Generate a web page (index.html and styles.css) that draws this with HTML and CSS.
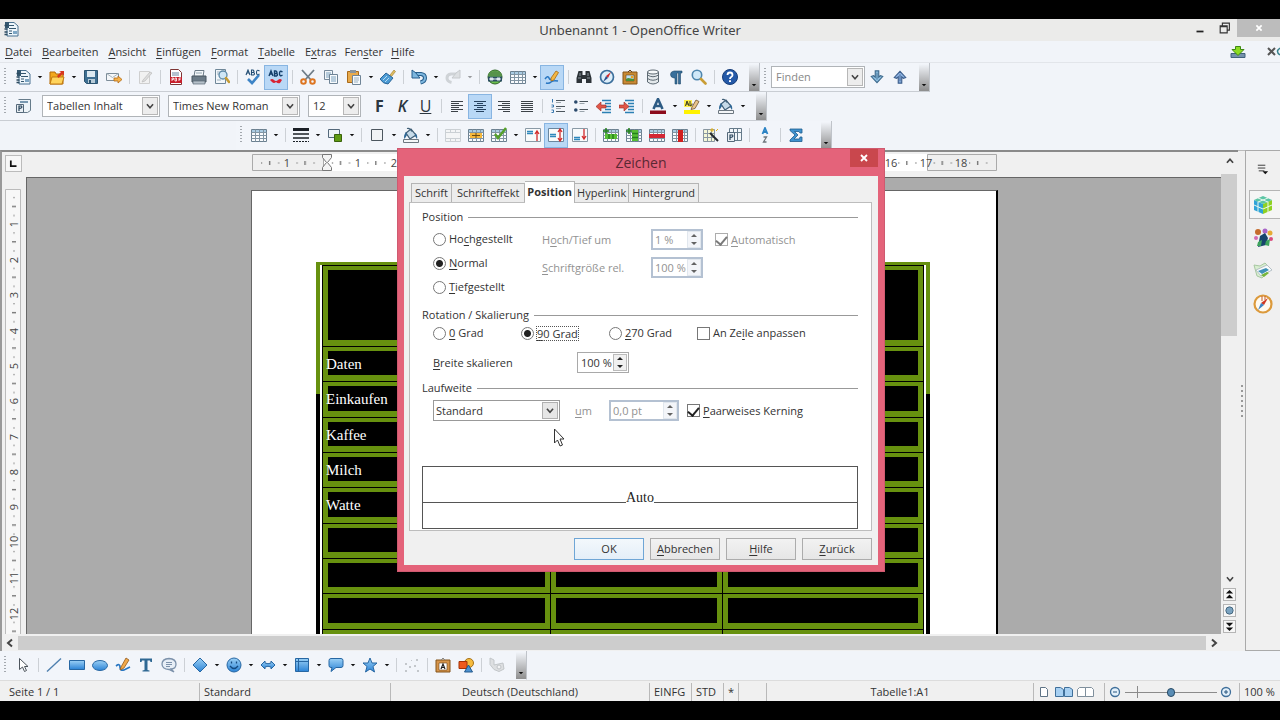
FILE: index.html
```html
<!DOCTYPE html>
<html lang="de">
<head>
<meta charset="utf-8">
<title>Unbenannt 1 - OpenOffice Writer</title>
<link rel="stylesheet" href="styles.css">
</head>
<body>
<svg class="sprite" aria-hidden="true">
  <defs>
    <linearGradient id="g-blue" x1="0" y1="0" x2="0" y2="1"><stop offset="0" stop-color="#9bd0f5"/><stop offset="1" stop-color="#2b83d6"/></linearGradient>
    <pattern id="ticks-h" x="71" width="35.4" height="18" patternUnits="userSpaceOnUse"><path d="M9 8h1v2h-1zM26 8h1v2h-1z" fill="#999"/><path d="M17 7h1v4h-1z" fill="#444"/></pattern>
    <pattern id="ticks-v" y="0" width="16" height="35.4" patternUnits="userSpaceOnUse"><path d="M8 8h2v1h-2zM8 26h2v1h-2z" fill="#999"/><path d="M7 17h4v1h-4z" fill="#444"/></pattern>
  </defs>
  <symbol id="i-new" viewBox="0 0 16 16"><path d="M4 1.500h7l4 3.500v10H4z" fill="#eef6fb" stroke="#4b7391"/><path d="M2 1h4v6H2z" fill="#34576f"/><path d="M6 4.500h5M6 7.500h7M6 12.500h3M6 10h3" stroke="#34576f"/><path d="M10 10h4v3h-4z" fill="#7fa7c4"/><path d="M1.500 4.500h3M1.500 8h3M1.500 11h3M1.500 13.500h3" stroke="#2d4b60" stroke-width="1.300"/></symbol>
  <symbol id="i-open" viewBox="0 0 16 16"><path d="M1 3h5l1 2h7v10H1z" fill="#f2a81d" stroke="#b46a0a"/><path d="M3 8h12l-2 7H1z" fill="#ffd45c" stroke="#c27b10"/><path d="M8 7l4-4-2-1h5v5l-1.500-2-4 4z" fill="#d8371f"/></symbol>
  <symbol id="i-save" viewBox="0 0 16 16"><path d="M1.500 1.500h13v13h-11l-2-2z" fill="#3e6f92" stroke="#2c5470"/><path d="M4 2h8v6H4z" fill="#dce9f1"/><path d="M5 10h7v4H5z" fill="#b8ccd8"/><path d="M6 11h2v3H6z" fill="#2c5470"/></symbol>
  <symbol id="i-mail" viewBox="0 0 16 16"><path d="M.5 4.500h12v7H.5z" fill="#f5f7f9" stroke="#7d8d99"/><path d="M.5 4.500l6 4 6-4" fill="none" stroke="#a7b4bd"/><path d="M8 9h4V7l4 3.500-4 3.500v-2H8z" fill="#f6b24a" stroke="#b36b14" stroke-width=".8"/></symbol>
  <symbol id="i-edit" viewBox="0 0 16 16"><path d="M2.500 2.500h10v12h-10z" fill="#f1f1f1" stroke="#cfcfcf"/><path d="M6 11l7-8 2 1-7 8-3 1z" fill="#ddd" stroke="#bbb" stroke-width=".7"/></symbol>
  <symbol id="i-pdf" viewBox="0 0 16 16"><path d="M2.500.5h8l3 3v12h-11z" fill="#fff" stroke="#7e3434"/><path d="M4 4h7M4 6h7" stroke="#6a87a0"/><path d="M2 8h12v6H2z" fill="#c8202c"/><path d="M4 12v-3h1.500v1.500H4M7 9v3h1.500V9zM11 12V9h2M11 10.500h1.500" stroke="#fff" fill="none" stroke-width=".8"/></symbol>
  <symbol id="i-print" viewBox="0 0 16 16"><path d="M4 1.500h9l-1 6H3z" fill="#f4f7f9" stroke="#6d7c88"/><path d="M1 7h14v6H1z" fill="#6c7b87" stroke="#46545f"/><path d="M2 12h12v3H2z" fill="#b6c1ca" stroke="#5a6872" stroke-width=".7"/><path d="M5 4h6" stroke="#93a4b0"/></symbol>
  <symbol id="i-preview" viewBox="0 0 16 16"><path d="M1.500.5h10v14h-10z" fill="#f3f7fa" stroke="#6f8798"/><path d="M3 3h6M3 5h4M3 11h4" stroke="#9db1bf"/><circle cx="9" cy="6" r="4" fill="#cfe7f7" stroke="#5c88a6" stroke-width="1.300"/><path d="M12 9l3 4" stroke="#c69c34" stroke-width="2.500" stroke-linecap="round"/></symbol>
  <symbol id="i-spell" viewBox="0 0 16 16"><path d="M1 6l2-5 2 5M2 4h2M6.500 1v5h2q2-1.500 0-2.500h-2 1.500q2-1 0-2.500zM14.500 2q-3-2-3 1.500t3 1.500" fill="none" stroke="#234e74" stroke-width="1.100"/><path d="M3 10l4 4 7-8" fill="none" stroke="#3d84c6" stroke-width="2.600"/></symbol>
  <symbol id="i-abc" viewBox="0 0 16 16"><path d="M1 7l2-5 2 5M2 5h2M6.500 2v5h2q2-1.500 0-2.500h-2 1.500q2-1 0-2.500zM14.500 3q-3-2-3 1.500t3 1.500" fill="none" stroke="#143f6b" stroke-width="1.400"/><path d="M2 11q2-2 4 0t4 0 4 0l-2 3q-2 1-4-1-2 2-4 0z" fill="#d92231"/></symbol>
  <symbol id="i-cut" viewBox="0 0 16 16"><path d="M2 1l9 10M14 1L5 11" stroke="#6f7d88" stroke-width="1.800"/><circle cx="3.500" cy="12.500" r="2.300" fill="none" stroke="#dd7521" stroke-width="2"/><circle cx="12.500" cy="12.500" r="2.300" fill="none" stroke="#dd7521" stroke-width="2"/></symbol>
  <symbol id="i-copy" viewBox="0 0 16 16"><path d="M1.500 1.500h8v9h-8z" fill="#f2f6f9" stroke="#76899a"/><path d="M3 4h5M3 6h5M3 8h5" stroke="#7ba0bd"/><path d="M6.500 5.500h8v9h-8z" fill="#f7fafc" stroke="#6f8496"/><path d="M8 8h5M8 10h5M8 12h5" stroke="#7ba0bd"/></symbol>
  <symbol id="i-paste" viewBox="0 0 16 16"><path d="M1.500 2.500h11v11h-11z" fill="#e8aa4c" stroke="#a96a1a"/><path d="M4 1h6v3H4z" fill="#8a949c"/><path d="M6.500 6.500h8v9h-8z" fill="#f7fafc" stroke="#6f8496"/><path d="M8 9h5M8 11h5M8 13h4" stroke="#9bb0c0"/></symbol>
  <symbol id="i-brush" viewBox="0 0 16 16"><path d="M10 6l4-5 1.500 1.500-4 5z" fill="#e0be62" stroke="#9a7728" stroke-width=".6"/><path d="M6 4l7 5-5 6q-5 0-8-5z" fill="#4b9ad4" stroke="#2b6699"/><path d="M3 11l4-4M5 13l4-4" stroke="#b5daf2"/></symbol>
  <symbol id="i-undo" viewBox="0 0 16 16"><path d="M3 5h7q4 .5 4 4t-4.500 4.500" fill="none" stroke="#265d8b" stroke-width="4"/><path d="M3 5h7q4 .5 4 4t-4.500 4.500" fill="none" stroke="#7db6de" stroke-width="2"/><path d="M1 1v8h8L6.500 6 5 4z" fill="#7db6de" stroke="#265d8b"/></symbol>
  <symbol id="i-redo" viewBox="0 0 16 16"><path d="M13 5H6Q2 5.500 2 9t4.500 4.500" fill="none" stroke="#cfd3d7" stroke-width="3"/><path d="M15 1v8H7l2.500-3L11 4z" fill="#dde0e3" stroke="#c6cacd"/></symbol>
  <symbol id="i-globe" viewBox="0 0 16 16"><circle cx="8" cy="8" r="7" fill="#6cc04e" stroke="#2f6424"/><path d="M2 4q6-4 12 0l1 3H1z" fill="#57934a"/><path d="M1 7.500h14v5H1z" fill="#2c4f63"/><path d="M3 9h3v2H3zM10 9h3v2h-3zM6 10h4" fill="#dfe8ee" stroke="#dfe8ee"/></symbol>
  <symbol id="i-table" viewBox="0 0 16 16"><path d="M.5 2.500h15v12H.5z" fill="#f9fbfd" stroke="#6b8090"/><path d="M1 3h14v2H1z" fill="#a9cbe2"/><path d="M.5 5.500h15M.5 8.500h15M.5 11.500h15M4.500 2.500v12M8.500 2.500v12M12.500 2.500v12" stroke="#8295a3" fill="none"/></symbol>
  <symbol id="i-draw" viewBox="0 0 16 16"><path d="M1 10q3-4 4-1t3 0M2 14q3 1 5-1t7-1" fill="none" stroke="#2876c2" stroke-width="1.500"/><path d="M7 9l5-7 2.500 1.500L10 11l-3 1z" fill="#f3b745" stroke="#a46a14" stroke-width=".8"/></symbol>
  <symbol id="i-binoc" viewBox="0 0 16 16"><path d="M2.500 2h4v4h3V2h4l2 7v5h-5.500v-4h-4v4H.5V9z" fill="#2d3338"/><path d="M2 9h3M11 9h3M4 4v3M12 4v3" stroke="#8c969d"/></symbol>
  <symbol id="i-nav" viewBox="0 0 16 16"><circle cx="8" cy="8" r="6.500" fill="#dceefa" stroke="#3c6f9c" stroke-width="1.700"/><path d="M12 3L9 9 7 7z" fill="#d42a2a"/><path d="M4 13l3-6 2 2z" fill="#2f4f8c"/></symbol>
  <symbol id="i-gallery" viewBox="0 0 16 16"><path d="M1 3h14v12H1z" fill="#c98a33" stroke="#84541a"/><path d="M4 6h8v6H4z" fill="#bfe0f2" stroke="#6b451a" stroke-width=".6"/><path d="M4 12v-2l2-1 6 1v2z" fill="#4c8f3a"/><circle cx="10" cy="8" r="1.300" fill="#f2a21c"/><path d="M6 3l2-2 2 2" fill="none" stroke="#6b451a"/></symbol>
  <symbol id="i-db" viewBox="0 0 16 16"><path d="M2.500 3v10q5.500 4 11 0V3z" fill="#e3e8eb" stroke="#5e6a73"/><ellipse cx="8" cy="3" rx="5.500" ry="2" fill="#f7f9fa" stroke="#5e6a73"/><path d="M2.500 6q5.500 3.500 11 0M2.500 9.500q5.500 3.500 11 0" fill="none" stroke="#5e6a73"/></symbol>
  <symbol id="i-pilcrow" viewBox="0 0 16 16"><path d="M14 2H6Q2.500 2.500 2.500 5.500T6 9h1v6h2V4h1.500v11h2V4H14z" fill="#386f9b" stroke="#20496b" stroke-width=".6"/></symbol>
  <symbol id="i-zoom" viewBox="0 0 16 16"><circle cx="6" cy="6" r="4.700" fill="#cfe8f8" stroke="#4e86ae" stroke-width="1.600"/><path d="M10 10l4.500 4.500" stroke="#c99d35" stroke-width="2.600" stroke-linecap="round"/></symbol>
  <symbol id="i-help" viewBox="0 0 16 16"><circle cx="8" cy="8" r="7.500" fill="#2459a8" stroke="#163d78"/><path d="M5.500 6q0-2.500 2.500-2.500T10.500 6q0 1.200-1.300 2T8 10" fill="none" stroke="#fff" stroke-width="1.800"/><path d="M7 11.200h2v1.800H7z" fill="#fff"/></symbol>
  <symbol id="i-down" viewBox="0 0 16 16"><path d="M6 1h4v7l2-1.500 2.500 1L8 14.500l-6.500-7 2.500-1L6 8z" fill="#8fc0e2" stroke="#3d6a8d" stroke-width="1.300"/><path d="M8 3v8" stroke="#3d6a8d"/></symbol>
  <symbol id="i-up" viewBox="0 0 16 16"><path d="M6 15h4V8l2 1.500 2.500-1L8 1.500l-6.500 7 2.500 1L6 8z" fill="#8fb4e2" stroke="#3d5f8d" stroke-width="1.300"/><path d="M8 5v8" stroke="#3d5f8d"/></symbol>
  <symbol id="i-styles" viewBox="0 0 16 16"><path d="M3.500 1.500h12v11l-3 2H8" fill="#eef4f8" stroke="#667b8a"/><path d="M5 4h8" stroke="#7a99b0" stroke-width="2"/><path d="M1.500 6.500h7v8h-7z" fill="#e8eef3" stroke="#55697a"/><path d="M4 13V8h2.500q1.500 2-2.500 2.500" fill="none" stroke="#2a465c" stroke-width="1.200"/></symbol>
  <symbol id="i-left" viewBox="0 0 16 16"><path d="M2 3.500h12M2 5.500h8M2 7.500h12M2 9.500h8M2 11.500h12M2 13.500h7" stroke="#3c4247"/></symbol>
  <symbol id="i-center" viewBox="0 0 16 16"><path d="M2 3.500h12M5 5.500h6M2 7.500h12M5 9.500h6M2 11.500h12M4 13.500h8" stroke="#25415f"/></symbol>
  <symbol id="i-right" viewBox="0 0 16 16"><path d="M2 3.500h12M6 5.500h8M2 7.500h12M6 9.500h8M2 11.500h12M7 13.500h7" stroke="#3c4247"/></symbol>
  <symbol id="i-just" viewBox="0 0 16 16"><path d="M2 3.500h12M2 5.500h12M2 7.500h12M2 9.500h12M2 11.500h12M2 13.500h12" stroke="#3c4247"/></symbol>
  <symbol id="i-num" viewBox="0 0 16 16"><path d="M2.500 1v3.500M1.500 7h2v2h-2M1.500 12h2v2.500h-2" fill="none" stroke="#3a79ae"/><path d="M6 2.500h9M6 8.500h9M6 13.500h9" stroke="#4b555c"/><path d="M6 4.500h5M6 10.500h5" stroke="#9aa4ab"/></symbol>
  <symbol id="i-bul" viewBox="0 0 16 16"><circle cx="2.800" cy="4" r="1.800" fill="#2b4a6c"/><circle cx="2.800" cy="12" r="1.800" fill="#2b4a6c"/><path d="M6.500 3.500H15M6.500 11.500H15" stroke="#4b555c"/><path d="M6.500 5.500h5M6.500 13.500h5" stroke="#9aa4ab"/></symbol>
  <symbol id="i-outd" viewBox="0 0 16 16"><path d="M6 2.500h9M9 5.500h6M9 8.500h6M9 11.500h6M6 14.500h9" stroke="#2b80b4" stroke-width="1.300"/><path d="M0 8.500L5 4v3h5v3H5v3z" fill="#e05648" stroke="#9b2a22" stroke-width=".6"/></symbol>
  <symbol id="i-ind" viewBox="0 0 16 16"><path d="M6 2.500h9M9 5.500h6M9 8.500h6M9 11.500h6M6 14.500h9" stroke="#2b80b4" stroke-width="1.300"/><path d="M10 8.500L5 4v3H0v3h5v3z" fill="#e05648" stroke="#9b2a22" stroke-width=".6"/></symbol>
  <symbol id="i-color" viewBox="0 0 16 16"><path d="M3.500 11L8 1l4.500 10M5 8h6" fill="none" stroke="#2d5b84" stroke-width="2.600"/><path d="M0 12.500h16V16H0z" fill="#8c0c1c"/></symbol>
  <symbol id="i-high" viewBox="0 0 16 16"><path d="M0 12h16v4H0z" fill="#fff200"/><path d="M0 2h8v7H0z" fill="#fff04a"/><path d="M1.500 8L3 3l2 5M2 6h2.500M6 3v5q3-1 2-2.500" fill="none" stroke="#3c3b21"/><path d="M8 9l4-7 3 1.500-4 7-4 1z" fill="#e9c58c" stroke="#6f5330" stroke-width=".8"/></symbol>
  <symbol id="i-fill" viewBox="0 0 16 16"><path d="M3 6l5-4 5 6-6 4z" fill="#c7dbe9" stroke="#3f5e76" stroke-width="1.200"/><path d="M4 1.500q3-1 5 3" fill="none" stroke="#3f5e76" stroke-width="1.200"/><path d="M3 5q-3 4-1.500 7L4 8zM12 6q3 2 2 6l-2-3z" fill="#2d6694"/><path d="M.5 12.500h15v3H.5z" fill="#f4f6f8" stroke="#6c7780"/></symbol>
  <symbol id="i-line" viewBox="0 0 16 16"><path d="M0 2.500h16" stroke="#1b2026" stroke-width="3"/><path d="M0 7h16M0 11h16" stroke="#1b2026" stroke-width="1.500"/><path d="M0 14.500h16" stroke="#1b2026" stroke-dasharray="2 1"/></symbol>
  <symbol id="i-lcol" viewBox="0 0 16 16"><path d="M1.500 2.500h11v8h-11z" fill="#eef3f7" stroke="#53687a"/><path d="M7.500 7.500h7v7h-7z" fill="#5f9a12" stroke="#39620a"/></symbol>
  <symbol id="i-bord" viewBox="0 0 16 16"><path d="M2.500 2.500h11v11h-11z" fill="#f1f3f5" stroke="#4c565e"/></symbol>
  <symbol id="i-merge" viewBox="0 0 16 16"><path d="M.5 2.500h15v12H.5zM.5 5.500h15M.5 11.500h15M5.500 2.500v3M10.500 2.500v3M5.500 11.500v3M10.500 11.500v3" fill="#f4f5f6" stroke="#cbd0d4"/></symbol>
  <symbol id="i-split" viewBox="0 0 16 16"><use href="#i-table"/><path d="M2 6h12v5H2z" fill="#f5b83d"/><path d="M4 8.500h8M8 6v5" stroke="#6b4b12"/></symbol>
  <symbol id="i-opt" viewBox="0 0 16 16"><use href="#i-table"/><path d="M4 7l3 4 8-10" fill="none" stroke="#55a02a" stroke-width="2.500"/></symbol>
  <symbol id="i-vtop" viewBox="0 0 16 16"><path d="M.5 1.500h15v13H.5z" fill="#f8fafb" stroke="#8a9aa6"/><path d="M2 4.500h6M2 6.500h6" stroke="#2e87bc" stroke-width="1.300"/><path d="M12 14V5M10 7l2-3 2 3" fill="none" stroke="#d22c2c" stroke-width="1.300"/></symbol>
  <symbol id="i-vmid" viewBox="0 0 16 16"><path d="M.5 1.500h15v13H.5z" fill="#f8fafb" stroke="#6a87a0"/><path d="M2 7.500h6M2 9.500h6" stroke="#2e87bc" stroke-width="1.300"/><path d="M12 13V3M10 5l2-3 2 3M10 11l2 3 2-3" fill="none" stroke="#d22c2c" stroke-width="1.300"/></symbol>
  <symbol id="i-vbot" viewBox="0 0 16 16"><path d="M.5 1.500h15v13H.5z" fill="#f8fafb" stroke="#8a9aa6"/><path d="M2 10.500h6M2 12.500h6" stroke="#2e87bc" stroke-width="1.300"/><path d="M12 2v9M10 9l2 3 2-3" fill="none" stroke="#d22c2c" stroke-width="1.300"/></symbol>
  <symbol id="i-insr" viewBox="0 0 16 16"><use href="#i-table"/><path d="M2 7h12v5H2z" fill="#57bd35"/><path d="M6 7v5M10 7v5M3 1v6M0 4h6" stroke="#23821a" stroke-width="1.500"/></symbol>
  <symbol id="i-insc" viewBox="0 0 16 16"><use href="#i-table"/><path d="M6 3h6v11H6z" fill="#57bd35"/><path d="M6 6.500h6M6 10.500h6M3 1v6M0 4h6" stroke="#23821a" stroke-width="1.500"/></symbol>
  <symbol id="i-delr" viewBox="0 0 16 16"><use href="#i-table"/><path d="M0 7h16v4H0z" fill="#d32734"/></symbol>
  <symbol id="i-delc" viewBox="0 0 16 16"><use href="#i-table"/><path d="M6 3h5v12H6z" fill="#d11f1f"/></symbol>
  <symbol id="i-auto" viewBox="0 0 16 16"><path d="M.5 2.500h11v12H.5zM.5 6.500h11M.5 10.500h11M4.500 2.500v12M8.500 2.500v12" fill="#f4f7d8" stroke="#8997a1"/><path d="M7 6l8 8" stroke="#24292d" stroke-width="2"/><path d="M9 1v4M7 3h4M13 4l2-2" stroke="#e3b21c"/></symbol>
  <symbol id="i-prop" viewBox="0 0 16 16"><path d="M3.500 1.500h12v12h-12zM3.500 5.500h12M11.500 1.500v12M7.500 1.500v4" fill="#f3f7fa" stroke="#667b8a"/><path d="M1.500 5.500h7v9h-7z" fill="#e8eef3" stroke="#55697a"/><path d="M4 13V8h2.500q1.500 2-2.500 2.500" fill="none" stroke="#2a465c" stroke-width="1.200"/></symbol>
  <symbol id="i-sort" viewBox="0 0 16 16"><path d="M5.500 7L8 1l2.500 6M6.500 5h3" fill="none" stroke="#2b83c4" stroke-width="1.800"/><path d="M6.500 10h3l-3 5h3" fill="none" stroke="#6c757c" stroke-width="1.300"/></symbol>
  <symbol id="i-sum" viewBox="0 0 16 16"><path d="M2 2h12v4h-2L11 4.500H6.500L10 8l-4 4h5.500l.5-2h2v4.500H2V13l5-5-5-4.500z" fill="#3f92cf" stroke="#205d8e" stroke-width=".8"/></symbol>
  <symbol id="i-cursor" viewBox="0 0 16 16"><path d="M4.500 1.500v11l3-2.500 2 4.500 2-1-2-4h3.500z" fill="#fff" stroke="#4d555c"/></symbol>
  <symbol id="i-dline" viewBox="0 0 16 16"><path d="M1 14.500L15 1.500" stroke="#4e7fae" stroke-width="1.400"/></symbol>
  <symbol id="i-rect" viewBox="0 0 16 16"><path d="M.5 3.500h15v9H.5z" fill="url(#g-blue)" stroke="#2767a3"/></symbol>
  <symbol id="i-ell" viewBox="0 0 16 16"><ellipse cx="8" cy="8.500" rx="7.500" ry="5" fill="url(#g-blue)" stroke="#2767a3"/></symbol>
  <symbol id="i-pen" viewBox="0 0 16 16"><path d="M1 9q4-3 4 1t4 3q4-2 6-3" fill="none" stroke="#2876c2" stroke-width="1.700"/><path d="M6 10l5-9 3 2-5 8-4 2z" fill="#f0a84a" stroke="#93591b" stroke-width=".8"/></symbol>
  <symbol id="i-T" viewBox="0 0 16 16"><path d="M2 1.500h12V5h-1.500L12 3.500H9.500V13l2 .5v1h-7v-1l2-.5V3.500H4L3.500 5H2z" fill="#2f6893"/></symbol>
  <symbol id="i-note" viewBox="0 0 16 16"><path d="M8 1.500q7 .5 7 5.500t-5 5l3 3-5-2.500Q1 12 1 7t7-5.500z" fill="#e7eef6" stroke="#7d92ab" stroke-width="1.300"/><path d="M5 5.500h6M5 7.500h6M5 9.500h4" stroke="#7d92ab"/></symbol>
  <symbol id="i-dia" viewBox="0 0 16 16"><path d="M8 1l7 7-7 7-7-7z" fill="url(#g-blue)" stroke="#2767a3"/></symbol>
  <symbol id="i-smile" viewBox="0 0 16 16"><circle cx="8" cy="8" r="7" fill="url(#g-blue)" stroke="#2767a3"/><path d="M4 9q4 5 8 0M5.500 4.500v2M10.500 4.500v2" fill="none" stroke="#144a80" stroke-width="1.300"/></symbol>
  <symbol id="i-arr" viewBox="0 0 16 16"><path d="M1 8l4-4v2q3 1.500 6 0V4l4 4-4 4v-2q-3-1.500-6 0v2z" fill="url(#g-blue)" stroke="#2767a3"/></symbol>
  <symbol id="i-flow" viewBox="0 0 16 16"><path d="M1.500 1.500h13v13h-13z" fill="url(#g-blue)" stroke="#2767a3"/><path d="M4.500 1.500v13M1.500 4.500h13" stroke="#2767a3"/></symbol>
  <symbol id="i-call" viewBox="0 0 16 16"><path d="M3 1.500h10q2 0 2 2v5q0 2-2 2H8l-5 4 1-4H3q-2 0-2-2v-5q0-2 2-2z" fill="url(#g-blue)" stroke="#2767a3"/></symbol>
  <symbol id="i-star" viewBox="0 0 16 16"><path d="M8 1l2 5h5l-4 3.500 1.500 5.500L8 12l-4.500 3L5 9.500 1 6h5z" fill="url(#g-blue)" stroke="#2767a3"/></symbol>
  <symbol id="i-pts" viewBox="0 0 16 16"><path d="M1 6h2v2H1zM7 3h1v1H7zM12 2h2v2h-2zM5 9h2v2H5zM1 13h2v2H1zM10 8h2v2h-2zM13 13h2v2h-2z" fill="#c3c7cb"/></symbol>
  <symbol id="i-fw" viewBox="0 0 16 16"><path d="M1 3h14v12H1z" fill="#d6944a" stroke="#84541a"/><path d="M4 6h8v7H4z" fill="#fff" stroke="#6b451a" stroke-width=".6"/><path d="M6 12l2-5 2 5M6.500 10.500h3" fill="none" stroke="#222" stroke-width="1.200"/><path d="M6 3l2-2 2 2" fill="none" stroke="#888"/></symbol>
  <symbol id="i-shapes" viewBox="0 0 16 16"><circle cx="11" cy="6" r="4.500" fill="#f6bb3d" stroke="#a6731a"/><path d="M1 4.500h8v7H1z" fill="#ef5a1d" stroke="#a33207"/><path d="M10.500 8l4 7h-8z" fill="#4c92d0" stroke="#22588c"/></symbol>
  <symbol id="i-extr" viewBox="0 0 16 16"><path d="M1 1l4 2v5l9-2 1 6-5 2.500-5-2-4-5z" fill="#dddfe1" stroke="#c2c6c9"/><circle cx="10" cy="10" r="2" fill="#f2f3f4" stroke="#bfc3c6"/></symbol>
  <symbol id="i-chev" viewBox="0 0 16 16"><path d="M4.500 6L8 10l3.500-4" fill="none" stroke="#444" stroke-width="1.800"/></symbol>
  <symbol id="i-tri" viewBox="0 0 8 8"><path d="M1 2.500h6L4 5.500z" fill="#111"/></symbol>
</svg>

<div class="app">
  <header class="titlebar">
    <svg class="ico app-ico"><use href="#i-new"/></svg>
    <h1 class="title">Unbenannt 1 - OpenOffice Writer</h1>
    <div class="winbtns">
      <button class="winbtn" aria-label="Minimieren"><svg viewBox="0 0 16 16"><path d="M4 12h8" stroke="#222" stroke-width="2"/></svg></button>
      <button class="winbtn" aria-label="Wiederherstellen"><svg viewBox="0 0 16 16"><path d="M5 5V2.500h8v8h-2M2.500 5.500h8v8h-8zM2 6.500h9" fill="none" stroke="#333" stroke-width="1.300"/></svg></button>
      <button class="winbtn winclose" aria-label="Schließen"><svg viewBox="0 0 16 16"><path d="M5 5l6 6M11 5l-6 6" stroke="#fff" stroke-width="2"/></svg></button>
    </div>
  </header>

  <nav class="menubar">
    <button><u>D</u>atei</button><button><u>B</u>earbeiten</button><button><u>A</u>nsicht</button><button><u>E</u>infügen</button><button><u>F</u>ormat</button><button><u>T</u>abelle</button><button>E<u>x</u>tras</button><button>Fen<u>s</u>ter</button><button><u>H</u>ilfe</button>
    <svg class="ico update" viewBox="0 0 16 16"><path d="M1 9.500h14v4H1z" fill="#7591ab" stroke="#41617c"/><path d="M5.500 2.500h5v3H14l-6 6-6-6h3.500z" fill="#8cdc22" stroke="#3f8a12"/></svg>
    <svg class="docclose" viewBox="0 0 14 12"><path d="M2 2l7 7M9 2L2 9" stroke="#555" stroke-width="2"/><path d="M14 2q-5 3.500 0 7" fill="none" stroke="#36818c" stroke-width="1.500"/></svg>
  </nav>

  <div class="row">
    <div class="bar">
      <span class="grip"></span>
      <button class="tb" aria-label="Neu"><svg><use href="#i-new"/></svg></button><button class="dd" aria-label="Neu Auswahl"><svg><use href="#i-tri"/></svg></button>
      <button class="tb" aria-label="Öffnen"><svg><use href="#i-open"/></svg></button><button class="dd" aria-label="Öffnen Auswahl"><svg><use href="#i-tri"/></svg></button>
      <button class="tb" aria-label="Speichern"><svg><use href="#i-save"/></svg></button><button class="tb" aria-label="E-Mail"><svg><use href="#i-mail"/></svg></button>
      <span class="sep"></span><button class="tb" aria-label="Bearbeiten"><svg><use href="#i-edit"/></svg></button><span class="sep"></span>
      <button class="tb" aria-label="PDF"><svg><use href="#i-pdf"/></svg></button><button class="tb" aria-label="Drucken"><svg><use href="#i-print"/></svg></button><button class="tb" aria-label="Seitenansicht"><svg><use href="#i-preview"/></svg></button>
      <span class="sep"></span><button class="tb" aria-label="Rechtschreibung"><svg><use href="#i-spell"/></svg></button><button class="tb on" aria-label="Automatische Prüfung"><svg><use href="#i-abc"/></svg></button><span class="sep"></span>
      <button class="tb" aria-label="Ausschneiden"><svg><use href="#i-cut"/></svg></button><button class="tb" aria-label="Kopieren"><svg><use href="#i-copy"/></svg></button><button class="tb" aria-label="Einfügen"><svg><use href="#i-paste"/></svg></button><button class="dd" aria-label="Einfügen Auswahl"><svg><use href="#i-tri"/></svg></button>
      <button class="tb" aria-label="Format übertragen"><svg><use href="#i-brush"/></svg></button><span class="sep"></span>
      <button class="tb" aria-label="Rückgängig"><svg><use href="#i-undo"/></svg></button><button class="dd" aria-label="Rückgängig Auswahl"><svg><use href="#i-tri"/></svg></button>
      <button class="tb" aria-label="Wiederholen"><svg><use href="#i-redo"/></svg></button><button class="dd dim" aria-label="Wiederholen Auswahl"><svg><use href="#i-tri"/></svg></button><span class="sep"></span>
      <button class="tb" aria-label="Hyperlink"><svg><use href="#i-globe"/></svg></button><button class="tb" aria-label="Tabelle"><svg><use href="#i-table"/></svg></button><button class="dd" aria-label="Tabelle Auswahl"><svg><use href="#i-tri"/></svg></button>
      <button class="tb on" aria-label="Zeichnen"><svg><use href="#i-draw"/></svg></button><span class="sep"></span>
      <button class="tb" aria-label="Suchen"><svg><use href="#i-binoc"/></svg></button><button class="tb" aria-label="Navigator"><svg><use href="#i-nav"/></svg></button><button class="tb" aria-label="Gallery"><svg><use href="#i-gallery"/></svg></button><button class="tb" aria-label="Datenquellen"><svg><use href="#i-db"/></svg></button><button class="tb" aria-label="Steuerzeichen"><svg><use href="#i-pilcrow"/></svg></button><button class="tb" aria-label="Maßstab"><svg><use href="#i-zoom"/></svg></button>
      <span class="sep"></span><button class="tb" aria-label="Hilfe"><svg><use href="#i-help"/></svg></button>
      <button class="more" aria-label="Mehr"><svg><use href="#i-tri"/></svg></button>
    </div>
    <div class="bar">
      <span class="grip"></span>
      <span class="combo find"><input aria-label="Suchtext" placeholder="Finden"><button aria-label="Suchliste"><svg><use href="#i-chev"/></svg></button></span>
      <button class="tb" aria-label="Weitersuchen"><svg class="small"><use href="#i-down"/></svg></button><button class="tb" aria-label="Rückwärts suchen"><svg class="small"><use href="#i-up"/></svg></button>
      <button class="more" aria-label="Mehr"><svg><use href="#i-tri"/></svg></button>
    </div>
  </div>

  <div class="row">
    <div class="bar">
      <span class="grip"></span>
      <button class="tb" aria-label="Formatvorlagen"><svg><use href="#i-styles"/></svg></button>
      <span class="combo style"><input aria-label="Vorlage" value="Tabellen Inhalt"><button aria-label="Vorlagenliste"><svg><use href="#i-chev"/></svg></button></span>
      <span class="combo font"><input aria-label="Schriftart" value="Times New Roman"><button aria-label="Schriftliste"><svg><use href="#i-chev"/></svg></button></span>
      <span class="combo size"><input aria-label="Schriftgrad" value="12"><button aria-label="Gradliste"><svg><use href="#i-chev"/></svg></button></span>
      <button class="tb txt bold" aria-label="Fett">F</button><button class="tb txt ital" aria-label="Kursiv">K</button><button class="tb txt under" aria-label="Unterstrichen">U</button>
      <span class="sep"></span>
      <button class="tb" aria-label="Linksbündig"><svg><use href="#i-left"/></svg></button><button class="tb on" aria-label="Zentriert"><svg><use href="#i-center"/></svg></button><button class="tb" aria-label="Rechtsbündig"><svg><use href="#i-right"/></svg></button><button class="tb" aria-label="Blocksatz"><svg><use href="#i-just"/></svg></button>
      <span class="sep"></span>
      <button class="tb" aria-label="Nummerierung"><svg><use href="#i-num"/></svg></button><button class="tb" aria-label="Aufzählung"><svg><use href="#i-bul"/></svg></button><button class="tb" aria-label="Einzug verkleinern"><svg><use href="#i-outd"/></svg></button><button class="tb" aria-label="Einzug vergrößern"><svg><use href="#i-ind"/></svg></button>
      <span class="sep"></span>
      <button class="tb" aria-label="Zeichenfarbe"><svg><use href="#i-color"/></svg></button><button class="dd" aria-label="Farbe Auswahl"><svg><use href="#i-tri"/></svg></button>
      <button class="tb" aria-label="Hervorheben"><svg><use href="#i-high"/></svg></button><button class="dd" aria-label="Hervorheben Auswahl"><svg><use href="#i-tri"/></svg></button>
      <button class="tb" aria-label="Hintergrund"><svg><use href="#i-fill"/></svg></button><button class="dd" aria-label="Hintergrund Auswahl"><svg><use href="#i-tri"/></svg></button>
      <button class="more" aria-label="Mehr"><svg><use href="#i-tri"/></svg></button>
    </div>
  </div>

  <div class="row tablerow">
    <div class="bar">
      <span class="grip"></span>
      <button class="tb" aria-label="Tabelle"><svg><use href="#i-table"/></svg></button><button class="dd" aria-label="Tabelle Auswahl"><svg><use href="#i-tri"/></svg></button><span class="sep"></span>
      <button class="tb" aria-label="Linienstil"><svg><use href="#i-line"/></svg></button><button class="dd" aria-label="Linienstil Auswahl"><svg><use href="#i-tri"/></svg></button>
      <button class="tb" aria-label="Rahmenfarbe"><svg><use href="#i-lcol"/></svg></button><button class="dd" aria-label="Rahmenfarbe Auswahl"><svg><use href="#i-tri"/></svg></button><span class="sep"></span>
      <button class="tb" aria-label="Umrandung"><svg><use href="#i-bord"/></svg></button><button class="dd" aria-label="Umrandung Auswahl"><svg><use href="#i-tri"/></svg></button>
      <button class="tb" aria-label="Füllfarbe"><svg><use href="#i-fill"/></svg></button><button class="dd" aria-label="Füllfarbe Auswahl"><svg><use href="#i-tri"/></svg></button><span class="sep"></span>
      <button class="tb" aria-label="Verbinden"><svg><use href="#i-merge"/></svg></button><button class="tb" aria-label="Teilen"><svg><use href="#i-split"/></svg></button><button class="tb" aria-label="Optimieren"><svg><use href="#i-opt"/></svg></button><button class="dd" aria-label="Optimieren Auswahl"><svg><use href="#i-tri"/></svg></button>
      <button class="tb" aria-label="Oben"><svg><use href="#i-vtop"/></svg></button><button class="tb on" aria-label="Mitte"><svg><use href="#i-vmid"/></svg></button><button class="tb" aria-label="Unten"><svg><use href="#i-vbot"/></svg></button><span class="sep"></span>
      <button class="tb" aria-label="Zeile einfügen"><svg><use href="#i-insr"/></svg></button><button class="tb" aria-label="Spalte einfügen"><svg><use href="#i-insc"/></svg></button><button class="tb" aria-label="Zeile löschen"><svg><use href="#i-delr"/></svg></button><button class="tb" aria-label="Spalte löschen"><svg><use href="#i-delc"/></svg></button><span class="sep"></span>
      <button class="tb" aria-label="AutoFormat"><svg><use href="#i-auto"/></svg></button><button class="tb" aria-label="Eigenschaften"><svg><use href="#i-prop"/></svg></button><span class="sep"></span>
      <button class="tb" aria-label="Sortieren"><svg><use href="#i-sort"/></svg></button><span class="sep"></span>
      <button class="tb" aria-label="Summe"><svg><use href="#i-sum"/></svg></button>
      <button class="more" aria-label="Mehr"><svg><use href="#i-tri"/></svg></button>
    </div>
  </div>

  <main class="work">
    <section class="editor">
      <div class="hruler">
        <button class="tabstop" aria-label="Tabulator"><svg viewBox="0 0 16 16"><path d="M5.500 4v6.500H12" fill="none" stroke="#111" stroke-width="2"/></svg></button>
        <div class="hscale">
          <svg width="745" height="18" viewBox="0 0 745 18">
            <path d="M71 0h604v17H71z" fill="#fff"/>
            <path d="M.5.5h71v16H.5zM675.500.5h69v16h-69z" fill="#efefef" stroke="#aaa"/>
            <path d="M0 0h745v18H0z" fill="url(#ticks-h)"/>
            <g class="num"><text x="35" y="13">1</text><text x="106" y="13">1</text><text x="142" y="13">2</text><text x="639" y="13">16</text><text x="674" y="13">17</text><text x="709" y="13">18</text></g>
            <path d="M70.500.5h9v3l-4 5 4 5v3h-9v-3l4-5-4-5z" fill="#f4f4f4" stroke="#777"/>
          </svg>
        </div>
      </div>
      <div class="vruler">
        <svg width="16" height="446" viewBox="0 0 16 446">
          <path d="M.5.500h15V446H.5z" fill="#f7f7f7" stroke="#bbb"/>
          <path d="M0 0h16v446H0z" fill="url(#ticks-v)"/>
          <g class="num"><text transform="translate(13 35) rotate(-90)">1</text><text transform="translate(13 71) rotate(-90)">2</text><text transform="translate(13 106) rotate(-90)">3</text><text transform="translate(13 142) rotate(-90)">4</text><text transform="translate(13 177) rotate(-90)">5</text><text transform="translate(13 212) rotate(-90)">6</text><text transform="translate(13 248) rotate(-90)">7</text><text transform="translate(13 283) rotate(-90)">8</text><text transform="translate(13 318) rotate(-90)">9</text><text transform="translate(13 353) rotate(-90)">10</text><text transform="translate(13 389) rotate(-90)">11</text><text transform="translate(13 425) rotate(-90)">12</text></g>
        </svg>
      </div>
      <div class="canvas">
        <div class="page">
          <div class="frame">
            <div class="frame-in">
              <table class="sheet">
                <colgroup><col class="c1"><col class="c2"><col class="c3"></colgroup>
                <tbody>
                  <tr class="head"><td colspan="3"></td></tr>
                  <tr><td>Daten</td><td></td><td></td></tr>
                  <tr><td>Einkaufen</td><td></td><td></td></tr>
                  <tr><td>Kaffee</td><td></td><td></td></tr>
                  <tr><td>Milch</td><td></td><td></td></tr>
                  <tr><td>Watte</td><td></td><td></td></tr>
                  <tr><td></td><td></td><td></td></tr>
                  <tr><td></td><td></td><td></td></tr>
                  <tr><td></td><td></td><td></td></tr>
                  <tr><td></td><td></td><td></td></tr>
                </tbody>
              </table>
            </div>
          </div>
        </div>
      </div>
      <div class="vscroll">
        <svg viewBox="0 0 16 16"><path d="M4.500 10L8 6l3.500 4" fill="none" stroke="#444" stroke-width="2"/></svg>
        <div class="vtrack"><div class="vthumb"></div></div>
        <svg class="vdown"><use href="#i-chev"/></svg>
        <button class="vnav" aria-label="Vorige Seite"><svg viewBox="0 0 12 12"><path d="M6 1l4 4H2zM6 6l4 4H2z" fill="#111"/></svg></button>
        <button class="vnav" aria-label="Navigation"><svg viewBox="0 0 12 12"><circle cx="6" cy="6" r="4" fill="#7ba3c0" stroke="#3f617a"/></svg></button>
        <button class="vnav" aria-label="Nächste Seite"><svg viewBox="0 0 12 12"><path d="M6 11l4-4H2zM6 6l4-4H2z" fill="#111"/></svg></button>
      </div>
      <div class="hscroll">
        <svg viewBox="0 0 16 16"><path d="M10 4.500L6 8l4 3.500" fill="none" stroke="#444" stroke-width="2"/></svg>
        <div class="hthumb"></div>
        <svg viewBox="0 0 16 16"><path d="M6 4.500L10 8l-4 3.500" fill="none" stroke="#444" stroke-width="2"/></svg>
        <span class="hpad"></span>
      </div>
    </section>
    <div class="splitter"><span></span></div>
    <aside class="sidebar">
      <button aria-label="Seitenleiste Menü"><svg class="sm" viewBox="0 0 16 16"><path d="M3 4.500h8M3 7.500h8M4 10.500h6" stroke="#333"/><path d="M8 11h6l-3 3z" fill="#111"/></svg></button>
      <button class="sel" aria-label="Eigenschaften"><svg viewBox="0 0 20 20"><path d="M1 5l9 4v10l-9-4z" fill="#2fa3d8"/><path d="M10 9l9-4v10l-9 4z" fill="#8fd122"/><path d="M1 5l9-4 9 4-9 4z" fill="#5bc5a4"/><path d="M5 7v10M1 10l9 4M15 7v10M10 14l9-4M5 3l10 4M15 3L5 7" stroke="#e9f8ee" fill="none"/></svg></button>
      <button aria-label="Formatvorlagen"><svg viewBox="0 0 20 20"><circle cx="5" cy="4" r="3" fill="#c56b2c"/><circle cx="12" cy="3" r="2.500" fill="#a864c8"/><circle cx="17" cy="5" r="2.500" fill="#e6aa35"/><circle cx="3" cy="10" r="2" fill="#d36ab4"/><circle cx="18" cy="11" r="2" fill="#d84c7d"/><path d="M7 8l5-3 3 5-2 7-8 2z" fill="#17446c"/><path d="M5 14l4-2-1 6H4zM13 13l4-2-1 7-4-1z" fill="#3da45d"/></svg></button>
      <button aria-label="Gallery"><svg viewBox="0 0 20 20"><path d="M1 4l6 1 5-3 6 6-9 9-5-2z" fill="#d8eed0" stroke="#a8c7a2"/><path d="M3 9l11-5 5 5-11 6z" fill="#f8fbfc" stroke="#b5bfc5"/><path d="M5 10l8-3 3 2-7 4z" fill="#3f91b8"/><path d="M8 14l3 2 5-4-2-1z" fill="#76b53b"/></svg></button>
      <button aria-label="Navigator"><svg viewBox="0 0 20 20"><circle cx="10" cy="10" r="8.500" fill="#fffaf0" stroke="#dc9a3c" stroke-width="2.200"/><path d="M15 4l-4 7-3-2z" fill="#cf3722"/><path d="M5 16l3-7 3 2z" fill="#3d83c3"/><path d="M9 2v5M12 2v4" stroke="#c45b2c"/></svg></button>
    </aside>
  </main>

  <div class="row drawrow">
    <div class="bar">
      <span class="grip"></span>
      <button class="tb" aria-label="Auswahl"><svg><use href="#i-cursor"/></svg></button><span class="sep"></span>
      <button class="tb" aria-label="Linie"><svg><use href="#i-dline"/></svg></button><button class="tb" aria-label="Rechteck"><svg><use href="#i-rect"/></svg></button><button class="tb" aria-label="Ellipse"><svg><use href="#i-ell"/></svg></button><button class="tb" aria-label="Freihand"><svg><use href="#i-pen"/></svg></button><button class="tb" aria-label="Text"><svg><use href="#i-T"/></svg></button><button class="tb" aria-label="Legende"><svg><use href="#i-note"/></svg></button><span class="sep"></span>
      <button class="tb" aria-label="Standardformen"><svg><use href="#i-dia"/></svg></button><button class="dd" aria-label="Standardformen Auswahl"><svg><use href="#i-tri"/></svg></button>
      <button class="tb" aria-label="Symbolformen"><svg><use href="#i-smile"/></svg></button><button class="dd" aria-label="Symbolformen Auswahl"><svg><use href="#i-tri"/></svg></button>
      <button class="tb" aria-label="Blockpfeile"><svg><use href="#i-arr"/></svg></button><button class="dd" aria-label="Blockpfeile Auswahl"><svg><use href="#i-tri"/></svg></button>
      <button class="tb" aria-label="Flussdiagramme"><svg><use href="#i-flow"/></svg></button><button class="dd" aria-label="Flussdiagramme Auswahl"><svg><use href="#i-tri"/></svg></button>
      <button class="tb" aria-label="Legenden"><svg><use href="#i-call"/></svg></button><button class="dd" aria-label="Legenden Auswahl"><svg><use href="#i-tri"/></svg></button>
      <button class="tb" aria-label="Sterne"><svg><use href="#i-star"/></svg></button><button class="dd" aria-label="Sterne Auswahl"><svg><use href="#i-tri"/></svg></button><span class="sep"></span>
      <button class="tb" aria-label="Punkte"><svg><use href="#i-pts"/></svg></button><span class="sep"></span>
      <button class="tb" aria-label="Fontwork"><svg><use href="#i-fw"/></svg></button><button class="tb" aria-label="Aus Datei"><svg><use href="#i-shapes"/></svg></button><span class="sep"></span>
      <button class="tb" aria-label="Extrusion"><svg><use href="#i-extr"/></svg></button>
      <button class="more" aria-label="Mehr"><svg><use href="#i-tri"/></svg></button>
    </div>
  </div>

  <footer class="status">
    <span>Seite 1 / 1</span><span>Standard</span><span class="mid">Deutsch (Deutschland)</span><span>EINFG</span><span>STD</span><span>*</span><span></span><span class="mid">Tabelle1:A1</span>
    <span class="views">
      <svg width="12" height="14" viewBox="0 0 12 14"><path d="M2.500 2.500h5l2 2v7h-7z" fill="#fff" stroke="#5f7486"/></svg>
      <svg width="18" height="14" viewBox="0 0 18 14"><path d="M.5 2.500h5l3 2v7h-8zM9.500 2.500h5l3 2v7h-8z" fill="#a7d0f2" stroke="#3f6f9a"/></svg>
      <svg width="18" height="14" viewBox="0 0 18 14"><path d="M2.500 2.500h6v9h-8v-7zM8.500 2.500h6l2 2v7h-8z" fill="#fff" stroke="#7f8f9c"/></svg>
    </span>
    <span class="zoom">
      <svg width="12" height="12" viewBox="0 0 12 12"><circle cx="6" cy="6" r="4.500" fill="#e3f0fa" stroke="#3f6f9a" stroke-width="1.300"/><path d="M4 6h4" stroke="#28567e"/></svg>
      <input type="range" aria-label="Zoom" min="0" max="100" value="50">
      <svg width="12" height="12" viewBox="0 0 12 12"><circle cx="6" cy="6" r="4.500" fill="#e3f0fa" stroke="#3f6f9a" stroke-width="1.300"/><path d="M4 6h4M6 4v4" stroke="#28567e"/></svg>
    </span>
    <span>100 %</span>
  </footer>
</div>

<div class="dialog" role="dialog" aria-labelledby="dlg-title">
  <div class="dlg-title"><h2 id="dlg-title">Zeichen</h2><button class="dlg-close" aria-label="Schließen"><svg viewBox="0 0 16 16"><path d="M4 4l8 8M12 4l-8 8" stroke="#fff" stroke-width="2.500"/></svg></button></div>
  <form class="dlg-body">
    <div class="tabs" role="tablist"><button type="button" role="tab">Schrift</button><button type="button" role="tab">Schrifteffekt</button><button type="button" role="tab" class="active" aria-selected="true">Position</button><button type="button" role="tab">Hyperlink</button><button type="button" role="tab">Hintergrund</button></div>
    <div class="panel">
      <div class="group">Position</div>
      <div class="pos">
        <div class="radios">
          <label><input type="radio" name="pos"><span>Ho<u>c</u>hgestellt</span></label>
          <label><input type="radio" name="pos" checked><span><u>N</u>ormal</span></label>
          <label><input type="radio" name="pos"><span><u>T</u>iefgestellt</span></label>
        </div>
        <div class="metrics">
          <label class="off" for="hoch">H<u>o</u>ch/Tief um</label>
          <span class="spin off"><input id="hoch" value="1 %" disabled><span class="arrows"><button type="button" disabled aria-label="mehr"></button><button type="button" disabled aria-label="weniger"></button></span></span>
          <label class="off"><input type="checkbox" checked disabled><span><u>A</u>utomatisch</span></label>
          <label class="off" for="rel"><u>S</u>chriftgröße rel.</label>
          <span class="spin off"><input id="rel" value="100 %" disabled><span class="arrows"><button type="button" disabled aria-label="mehr"></button><button type="button" disabled aria-label="weniger"></button></span></span>
        </div>
      </div>
      <div class="group g2">Rotation / Skalierung</div>
      <div class="rot">
        <label><input type="radio" name="rot"><span><u>0</u> Grad</span></label>
        <label><input type="radio" name="rot" checked><span class="focus"><u>9</u>0 Grad</span></label>
        <label><input type="radio" name="rot"><span><u>2</u>70 Grad</span></label>
        <label><input type="checkbox"><span>An Ze<u>i</u>le anpassen</span></label>
      </div>
      <div class="scale">
        <label for="breite"><u>B</u>reite skalieren</label>
        <span class="spin"><input id="breite" value="100 %"><span class="arrows"><button type="button" aria-label="mehr"></button><button type="button" aria-label="weniger"></button></span></span>
      </div>
      <div class="group g3">Laufweite</div>
      <div class="kern">
        <span class="drop"><select aria-label="Laufweite"><option>Standard</option></select><svg><use href="#i-chev"/></svg></span>
        <label class="off" for="um"><u>u</u>m</label>
        <span class="spin wide off"><input id="um" value="0,0 pt" disabled><span class="arrows"><button type="button" disabled aria-label="mehr"></button><button type="button" disabled aria-label="weniger"></button></span></span>
        <label><input type="checkbox" checked><span><u>P</u>aarweises Kerning</span></label>
      </div>
      <div class="preview"><span>Auto</span></div>
    </div>
    <div class="actions"><button type="button" class="ok">OK</button><button type="button"><u>A</u>bbrechen</button><button type="button"><u>H</u>ilfe</button><button type="button"><u>Z</u>urück</button></div>
  </form>
  <svg class="pointer" viewBox="0 0 12 20"><path d="M1.500 1v14l3-3 2.500 6 2.500-1-2.500-6H11z" fill="#fff" stroke="#333"/></svg>
</div>
</body>
</html>
```

FILE: styles.css
```css
* { box-sizing: border-box; }

body {
  margin: 0;
  height: 100vh;
  padding: 19px 0;
  background: #000;
  color: #333;
  font: 11px/16px "Open Sans", "Noto Sans", sans-serif;
  position: relative;
  overflow: hidden;
}

button, input, select { font: inherit; color: inherit; margin: 0; padding: 0; }
button { border: 0; background: none; }
h1, h2 { margin: 0; font-weight: 400; }
u { text-underline-offset: 2px; }
.sprite { position: absolute; width: 0; height: 0; }

.app { height: 100%; display: flex; flex-direction: column; background: #f1f4f9; overflow: hidden; }

/* Title bar and menu */
.titlebar { flex: 0 0 22px; display: grid; grid-template-columns: 1fr auto 1fr; background: #ebebea; }
.ico { width: 16px; height: 16px; }
.app-ico { margin: 2px 3px; }
.title { font: 13px/22px "Noto Sans", "Open Sans", sans-serif; color: #444; }
.winbtns { display: flex; justify-content: flex-end; align-items: flex-start; }
.winbtn { width: 25px; height: 18px; display: grid; place-items: center; }
.winbtn svg { width: 14px; height: 14px; }
.winclose { width: 43px; background: #bcbcbc; }
.menubar { flex: 0 0 22px; display: flex; align-items: center; padding-left: 5px; border-bottom: 1px solid #e2e5ea; }
.menubar button { margin-right: 10px; }
.menubar button:nth-child(n+7) { margin-right: 8px; }
.menubar .update { margin-left: auto; margin-right: 20px; }
.docclose { width: 14px; height: 12px; }

/* Toolbars */
.row { flex: 0 0 29px; display: flex; }
.bar { display: flex; align-items: center; border-right: 1px solid #bfc3c9; border-bottom: 1px solid #c9cdd3; background: #f2f5fa; height: 29px; }
.tablerow { padding-left: 236px; }
.tablerow .bar { border-bottom-color: transparent; }
.grip { width: 11px; height: 18px; background: repeating-linear-gradient(#a3a8ae 0 1px, transparent 1px 3px) 4px 0 / 2px 18px no-repeat; }
.tb { width: 23px; height: 25px; display: grid; place-items: center; }
.tb svg { width: 16px; height: 16px; }
.tb svg.small { width: 14px; height: 14px; }
.tb.on { width: 24px; background: #b9d8f6; border: 1px solid #88b5e2; }
.dd { width: 11px; height: 25px; display: grid; place-items: center; }
.dd svg, .more svg { width: 6px; height: 6px; }
.dd.dim { opacity: .4; }
.sep { width: 8px; height: 14px; background: linear-gradient(#ccd0d5, #ccd0d5) center / 1px 14px no-repeat; }
.more { width: 10px; height: 27px; margin-left: 8px; display: grid; place-items: end center; padding-bottom: 3px; background: linear-gradient(#f2f5fa, #8e8e8e); }
.tablerow .more { margin-left: 14px; }
.txt { font-size: 16px; color: #2b3640; }
.bold { font-weight: 700; }
.ital { font-style: italic; font-weight: 600; }
.under { text-decoration: underline; }

.combo { height: 22px; display: flex; background: #fff; border: 1px solid #b0b4b8; padding: 1px; }
.combo input { flex: 1; min-width: 0; border: 0; outline: 0; padding-left: 3px; background: none; }
.combo input::placeholder { color: #888; opacity: 1; }
.combo button { width: 16px; background: #ededed; border: 1px solid #b7b7b7; display: grid; place-items: center; }
.combo svg { width: 14px; height: 14px; }
.find { width: 94px; }
.style { width: 118px; margin-left: 8px; }
.font { width: 132px; margin-left: 8px; }
.size { width: 53px; margin: 0 7px 0 8px; }

/* Work area */
.work { flex: 1; min-height: 0; display: flex; background: #f0f0f0; }
.editor { flex: 1; min-width: 0; display: grid; grid-template: 25px minmax(0, 1fr) 17px / 25px minmax(0, 1fr) 17px; border-top: 2px solid #8a8a8a; border-left: 2px solid #999; }
.hruler { grid-column: 1 / 3; display: flex; }
.tabstop { width: 17px; height: 17px; margin: 3px 6px 0 3px; border: 1px solid #bbb; background: #f7f7f7; }
.tabstop svg { width: 14px; height: 14px; display: block; }
.hscale { flex: 1; min-width: 0; display: flex; justify-content: center; padding: 2px 0 0 0; }
.num { font-size: 11px; fill: #444; text-anchor: middle; }
.vruler { grid-column: 1; padding: 12px 0 0 3px; overflow: hidden; border-right: 1px solid #666; }
.vruler svg { display: block; }
.canvas { background: #ababab; border-top: 1px solid #666; display: flex; justify-content: center; padding: 12px 0 0 1px; overflow: hidden; }
.page { width: 747px; height: 1050px; background: #fff; border: solid #666; border-width: 1px 2px 0 1px; border-right-color: #000; padding: 71px 66px 0 64px; }
.frame { background: linear-gradient(#67910f 132px, #000 132px); padding: 3px 4px 0; }
.frame-in { background: #fff; padding: 0 2px; }
.sheet { width: 100%; height: 400px; table-layout: fixed; border-collapse: separate; border-spacing: 1px; background: #000; color: #fff; font: 15px/18px "Liberation Serif", serif; }
.c1 { width: 227px; }
.c2 { width: 171px; }
.sheet td { height: 34px; padding: 0 0 0 3px; box-shadow: inset 5px 4px 0 #67910f, inset -5px -6px 0 #67910f; }
.sheet .head td { height: 79px; }

.vscroll { grid-row: 1 / 3; grid-column: 3; display: flex; flex-direction: column; align-items: center; }
.vscroll svg { width: 14px; height: 14px; margin: 2px 0 6px; flex: none; }
.vtrack { flex: 1; align-self: stretch; }
.vthumb { height: 41%; background: #cdcdcd; margin-right: 1px; }
.vscroll .vdown { margin: 2px 0; }
.vnav { width: 13px; height: 13px; margin-bottom: 3px; border: 1px solid #b5b5b5; background: #f7f7f7; display: grid; place-items: center; flex: none; }
.vscroll .vnav:last-child { margin-bottom: 1px; }
.vscroll .vnav svg { width: 11px; height: 11px; margin: 0; }
.hscroll { grid-column: 1 / 4; display: flex; align-items: center; }
.hscroll svg { width: 16px; height: 16px; }
.hthumb { flex: 1; height: 14px; background: #cdcdcd; }
.hpad { width: 16px; }

.splitter { width: 7px; display: grid; place-items: center; border-top: 1px solid #bbb; }
.splitter span { width: 2px; height: 32px; background: repeating-linear-gradient(#999 0 2px, transparent 2px 5px); }
.sidebar { width: 35px; border: solid #aaa; border-width: 1px 0 1px 1px; display: flex; flex-direction: column; align-items: flex-end; gap: 4px; padding-top: 3px; }
.sidebar button { width: 31px; height: 29px; padding-left: 3px; display: grid; place-items: center start; border: 1px solid transparent; border-right: 0; }
.sidebar .sel { border-color: #b5b5b5; background: #f5f5f5; margin-top: 3px; }
.sidebar svg { width: 20px; height: 20px; }
.sidebar .sm { width: 15px; height: 15px; margin-left: 2px; }

/* Status bar */
.drawrow .bar { border-bottom-color: transparent; }
.status { flex: 0 0 21px; display: grid; grid-template-columns: 199fr 191fr 259fr 42px 32px 15px 28px 267fr 71px 135px 41px; background: #f0f0f0; border-top: 1px solid #dcdcdc; line-height: 20px; white-space: nowrap; }
.status > span { border-left: 1px solid #b9b9b9; padding-left: 4px; margin-top: 2px; line-height: 18px; }
.status > span:first-child { border-left: 0; padding-left: 9px; }
.status .mid { text-align: center; padding: 0; }
.views, .zoom { display: flex; align-items: center; justify-content: space-between; }
.status .views { padding-right: 9px; }
.status .zoom { padding-right: 7px; }
.zoom input { appearance: none; width: 92px; height: 12px; background: linear-gradient(#8b8b8b, #8b8b8b) center / 100% 1px no-repeat, linear-gradient(#8b8b8b, #8b8b8b) 12px 0 / 1px 12px no-repeat; }
.zoom input::-webkit-slider-thumb { appearance: none; width: 8px; height: 9px; border: 1px solid #294b66; border-radius: 4px; background: #5a8db5; }

/* Character dialog */
.dialog { position: absolute; left: calc(50% - 243px); top: 148px; width: 488px; background: #e4637a; border: 1px solid #cf5a70; padding: 0 6px 6px; }
.dlg-title { height: 27px; display: flex; position: relative; justify-content: center; }
.dlg-title h2 { font-size: 14px; line-height: 27px; color: #5a2833; }
.dlg-close { position: absolute; right: 0; top: 0; width: 28px; height: 18px; background: #c9474d; display: grid; place-items: center; }
.dlg-close svg { width: 12px; height: 12px; }
.dlg-body { background: #f0f0f0; padding: 5px 6px 5px 5px; }
.tabs { display: flex; align-items: flex-end; padding-left: 2px; height: 21px; }
.tabs button { height: 19px; padding: 0 3px; border: 1px solid #b4b4b4; border-bottom: 0; border-left-width: 0; background: #ececec; }
.tabs button:first-child { border-left-width: 1px; }
.tabs button:nth-child(2) { padding: 0 5px; }
.tabs .active { height: 22px; margin-bottom: -1px; padding: 0 2px 2px; background: #fff; font-weight: 700; position: relative; }
.tabs button:nth-child(4) { padding: 0 2px; }
.panel { border: 1px solid #bdbdbd; background: #fff; padding: 6px 13px 2px 12px; height: 329px; }
.group { display: flex; align-items: center; gap: 5px; }
.group::after { content: ""; flex: 1; height: 1px; background: #999; }
.g2 { margin-top: 8px; }
.g3 { margin-top: 7px; }
.panel label { display: flex; align-items: center; }
.panel label input { appearance: none; width: 13px; height: 13px; border: 1px solid #777; background: #fff; margin-right: 3px; flex: none; display: grid; place-items: center; }
.panel input[type="radio"] { border-radius: 50%; }
.panel input[type="radio"]:checked { background: radial-gradient(circle, #222 0 3px, #fff 4px); }
.panel input[type="checkbox"]:checked::before { content: ""; width: 5px; height: 9px; margin-bottom: 2px; border: solid #222; border-width: 0 2px 2px 0; transform: rotate(40deg); }
.panel .off { color: #929292; }
.panel .off input[type="checkbox"] { opacity: .6; }
.pos { display: flex; margin-top: 2px; padding-left: 11px; }
.radios { width: 109px; display: grid; grid-auto-rows: 24px; }
.metrics { display: grid; grid-template-columns: 109px 64px auto; grid-auto-rows: 21px; row-gap: 7px; padding-top: 2px; }
.rot { display: grid; grid-template-columns: 88px 88px 88px auto; padding-left: 11px; height: 20px; }
.focus { outline: 1px dotted #555; line-height: 13px; }
.scale { display: flex; align-items: center; margin-top: 9px; padding-left: 11px; }
.scale label { width: 144px; }
.spin { width: 52px; height: 21px; border: 1px solid #a9a9a9; display: flex; background: #fff; padding: 1px; }
.spin > input { flex: 1; min-width: 0; width: 20px; border: 0; padding: 0 0 0 2px; background: none; }
.spin.off { border: 2px solid #b4c1d2; padding: 0; }
.spin.wide { width: 70px; }
.arrows { width: 14px; display: grid; grid-template-rows: 1fr 1fr; background: #f0f0f0; border: 1px solid #bbb; }
.off .arrows { border-color: #d5dde8; background: #eef2f7; }
.arrows button { display: grid; place-items: center; }
.arrows button::before { content: ""; border: solid transparent; border-width: 0 3px 3px; border-bottom-color: #222; }
.arrows button:last-child::before { border-width: 3px 3px 0; border-top-color: #222; }
.off .arrows { opacity: .7; }
.kern { display: flex; align-items: center; margin-top: 4px; padding-left: 11px; }
.kern > label.off { width: 34px; margin-left: 15px; }
.kern > label:last-child { margin-left: 8px; }
.drop { width: 127px; height: 21px; display: grid; border: 1px solid #999; background: #fff; }
.drop select { grid-area: 1 / 1; appearance: none; border: 0; background: none; padding-left: 2px; }
.drop svg { grid-area: 1 / 1; justify-self: end; width: 16px; height: 17px; margin: 1px; background: #e6e6e6; border: 1px solid #b0b0b0; pointer-events: none; }
.preview { margin-top: 45px; height: 63px; border: 1px solid #555; background: linear-gradient(#555, #555) 0 35px / 100% 1px no-repeat; text-align: center; font: 14px/18px "Liberation Serif", serif; padding-top: 22px; color: #222; }
.preview span { background: linear-gradient(#fff, #fff) 0 0 / 100% 13px no-repeat; }
.actions { display: flex; justify-content: flex-end; gap: 6px; margin-top: 7px; }
.actions button { width: 70px; height: 22px; border: 1px solid #acacac; background: linear-gradient(#f2f2f2, #e6e6e6); }
.actions .ok { border-color: #6fa6d6; background: linear-gradient(#f3f8fc, #e4eef8); }
.pointer { position: absolute; left: 155px; top: 279px; width: 12px; height: 20px; pointer-events: none; }
```
